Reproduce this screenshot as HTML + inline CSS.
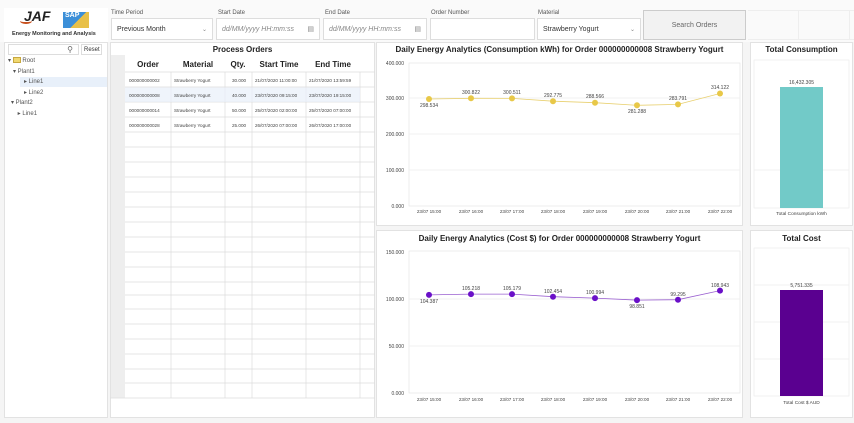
<!DOCTYPE html>
<html><head><meta charset="utf-8"><style>
*{box-sizing:border-box;margin:0;padding:0}
body{width:854px;height:423px;background:#f5f5f5;font-family:"Liberation Sans",sans-serif;position:relative;overflow:hidden;color:#333}
.a{position:absolute}
.lbl{font-size:6px;color:#555}
.box{background:#fff;border:1px solid #ddd;font-size:7px;color:#333;padding:0 5px;display:flex;align-items:center}
.panel{background:#fff;border:1px solid #e2e2e2}
.t{font-size:8px;font-weight:bold;color:#222;text-align:center}
</style></head><body>
<div class="a" style="left:0;top:0;width:854px;height:42px;background:#fafafa"></div>
<!-- logo -->
<div class="a" style="left:4px;top:8px;width:104px;height:34px;background:#fff"></div>
<div class="a" style="left:24px;top:8px;font-size:14px;font-weight:bold;font-style:italic;color:#222">JAF</div>
<div class="a" style="left:20px;top:18px;width:12px;height:6px;border-bottom:2px solid #c8501e;border-radius:50%"></div>
<div class="a" style="left:63px;top:12px;width:26px;height:16px;background:linear-gradient(135deg,#3c8fd8 55%,#e8c048 55%)"></div>
<div class="a" style="left:65px;top:12px;font-size:7px;font-weight:bold;color:#fff">SAP</div>
<div class="a" style="left:12px;top:31px;font-size:5.5px;font-weight:bold;color:#333">Energy Monitoring and Analysis</div>
<!-- filters -->
<div class="a lbl" style="left:111px;top:10px">Time Period</div>
<div class="a box" style="left:111px;top:18px;width:102px;height:22px;justify-content:space-between">Previous Month<span style="font-size:6px;color:#888">⌄</span></div>
<div class="a lbl" style="left:218px;top:10px">Start Date</div>
<div class="a box" style="left:216px;top:18px;width:104px;height:22px;justify-content:space-between;color:#888;font-style:italic">dd/MM/yyyy HH:mm:ss<span style="font-style:normal">▤</span></div>
<div class="a lbl" style="left:325px;top:10px">End Date</div>
<div class="a box" style="left:323px;top:18px;width:104px;height:22px;justify-content:space-between;color:#888;font-style:italic">dd/MM/yyyy HH:mm:ss<span style="font-style:normal">▤</span></div>
<div class="a lbl" style="left:431px;top:10px">Order Number</div>
<div class="a box" style="left:430px;top:18px;width:105px;height:22px"></div>
<div class="a lbl" style="left:538px;top:10px">Material</div>
<div class="a box" style="left:537px;top:18px;width:104px;height:22px;justify-content:space-between">Strawberry Yogurt<span style="font-size:6px;color:#888">⌄</span></div>
<div class="a box" style="left:643px;top:10px;width:103px;height:30px;background:#f2f2f2;border-color:#ccc;justify-content:center;color:#666">Search Orders</div>
<div class="a" style="left:748px;top:10px;width:106px;height:30px;border-top:1px solid #eee;border-bottom:1px solid #eee;background:repeating-linear-gradient(90deg,transparent 0 50px,#eee 50px 51px)"></div>
<!-- tree -->
<div class="a panel" style="left:4px;top:42px;width:104px;height:376px"></div>
<div class="a box" style="left:8px;top:44px;width:71px;height:11px;justify-content:flex-end;font-size:8px;color:#666">⚲</div>
<div class="a box" style="left:81px;top:44px;width:21px;height:11px;font-size:6px;padding:0 2px">Reset</div>
<div class="a" style="left:8px;top:56px;font-size:6px;color:#555;line-height:11px">▾ <span style="display:inline-block;width:8px;height:6px;background:#f0d870;border:1px solid #c8a840;vertical-align:middle"></span> Root<br>&nbsp;&nbsp;&nbsp;▾ Plant1</div>
<div class="a" style="left:20px;top:77px;width:87px;height:10px;background:#e8f0fa"></div>
<div class="a" style="left:24px;top:77px;font-size:6px;color:#555;line-height:10.5px">▸ Line1<br>▸ Line2</div>
<div class="a" style="left:11px;top:98px;font-size:6px;color:#555;line-height:10.5px">▾ Plant2<br>&nbsp;&nbsp;&nbsp;&nbsp;▸ Line1</div>
<!-- table -->
<div class="a panel" style="left:110px;top:42px;width:265px;height:376px"></div>
<div class="a t" style="left:110px;top:45px;width:265px">Process Orders</div>
<div class="a" style="left:111px;top:55px;width:14px;height:343px;background:#eee"></div>
<svg class="a" style="left:0;top:0" width="854" height="423">
<g stroke="#ddd" stroke-width="0.7">
<line x1="125" y1="72" x2="375" y2="72"/>
<line x1="125" y1="87" x2="375" y2="87"/><line x1="125" y1="102" x2="375" y2="102"/><line x1="125" y1="117" x2="375" y2="117"/><line x1="125" y1="132" x2="375" y2="132"/><line x1="125" y1="147" x2="375" y2="147"/><line x1="125" y1="162" x2="375" y2="162"/><line x1="125" y1="177" x2="375" y2="177"/><line x1="125" y1="192" x2="375" y2="192"/><line x1="125" y1="207" x2="375" y2="207"/><line x1="125" y1="222" x2="375" y2="222"/><line x1="125" y1="237" x2="375" y2="237"/><line x1="125" y1="252" x2="375" y2="252"/><line x1="125" y1="267" x2="375" y2="267"/><line x1="125" y1="282" x2="375" y2="282"/><line x1="125" y1="295" x2="375" y2="295"/><line x1="125" y1="309" x2="375" y2="309"/><line x1="125" y1="324" x2="375" y2="324"/><line x1="125" y1="339" x2="375" y2="339"/><line x1="125" y1="354" x2="375" y2="354"/><line x1="125" y1="369" x2="375" y2="369"/><line x1="125" y1="383" x2="375" y2="383"/><line x1="110" y1="398" x2="375" y2="398"/>
<line x1="171" y1="72" x2="171" y2="398"/><line x1="225" y1="72" x2="225" y2="398"/><line x1="252" y1="72" x2="252" y2="398"/><line x1="306" y1="72" x2="306" y2="398"/><line x1="360" y1="72" x2="360" y2="398"/>
</g>
<rect x="125" y="87.5" width="235" height="14.5" fill="#e8f0fa" opacity="0.7"/>
<g font-size="8" font-weight="bold" fill="#222" text-anchor="middle" font-family="Liberation Sans">
<text x="148" y="67">Order</text><text x="198" y="67">Material</text><text x="238" y="67">Qty.</text><text x="279" y="67">Start Time</text><text x="333" y="67">End Time</text></g>
<g font-size="4.6" fill="#444" font-family="Liberation Sans">
<text x="129" y="82">000000000002</text><text x="174" y="82">Strawberry Yogurt</text><text x="232" y="82">30.000</text><text x="255" y="82">21/07/2020 11:00:00</text><text x="309" y="82">21/07/2020 13:59:59</text>
<text x="129" y="97">000000000008</text><text x="174" y="97">Strawberry Yogurt</text><text x="232" y="97">40.000</text><text x="255" y="97">23/07/2020 09:15:00</text><text x="309" y="97">23/07/2020 19:15:00</text>
<text x="129" y="112">000000000014</text><text x="174" y="112">Strawberry Yogurt</text><text x="232" y="112">50.000</text><text x="255" y="112">25/07/2020 02:00:00</text><text x="309" y="112">25/07/2020 07:00:00</text>
<text x="129" y="127">000000000028</text><text x="174" y="127">Strawberry Yogurt</text><text x="232" y="127">25.000</text><text x="255" y="127">26/07/2020 07:00:00</text><text x="309" y="127">26/07/2020 17:00:00</text>
</g>
</svg>
<!-- chart panels -->
<div class="a panel" style="left:376px;top:42px;width:367px;height:184px"></div>
<div class="a panel" style="left:376px;top:230px;width:367px;height:188px"></div>
<div class="a panel" style="left:750px;top:42px;width:103px;height:184px"></div>
<div class="a panel" style="left:750px;top:230px;width:103px;height:188px"></div>
<div class="a t" style="left:376px;top:45px;width:367px">Daily Energy Analytics (Consumption kWh) for Order 000000000008 Strawberry Yogurt</div>
<div class="a t" style="left:376px;top:234px;width:367px">Daily Energy Analytics (Cost $) for Order 000000000008 Strawberry Yogurt</div>
<div class="a t" style="left:750px;top:45px;width:103px">Total Consumption</div>
<div class="a t" style="left:750px;top:234px;width:103px">Total Cost</div>
<svg class="a" style="left:0;top:0" width="854" height="423" font-family="Liberation Sans">
<!-- consumption -->
<rect x="409" y="63" width="331" height="143" fill="none" stroke="#e6e6e6" stroke-width="0.7"/>
<g stroke="#eee" stroke-width="0.7"><line x1="409" y1="98" x2="740" y2="98"/><line x1="409" y1="134" x2="740" y2="134"/><line x1="409" y1="170" x2="740" y2="170"/></g>
<g font-size="5" fill="#444" text-anchor="end"><text x="404" y="65">400.000</text><text x="404" y="100">300.000</text><text x="404" y="136">200.000</text><text x="404" y="172">100.000</text><text x="404" y="208">0.000</text></g>
<g font-size="4.6" fill="#444" text-anchor="middle"><text x="429" y="213">23/07 15:00</text><text x="471" y="213">23/07 16:00</text><text x="512" y="213">23/07 17:00</text><text x="553" y="213">23/07 18:00</text><text x="595" y="213">23/07 19:00</text><text x="637" y="213">23/07 20:00</text><text x="678" y="213">23/07 21:00</text><text x="720" y="213">23/07 22:00</text></g>
<polyline points="429,99 471,98.3 512,98.4 553,101.2 595,102.7 637,105.3 678,104.4 720,93.5" fill="none" stroke="#e8d070" stroke-width="0.8"/>
<g fill="#e8c848"><circle cx="429" cy="99" r="3"/><circle cx="471" cy="98.3" r="3"/><circle cx="512" cy="98.4" r="3"/><circle cx="553" cy="101.2" r="3"/><circle cx="595" cy="102.7" r="3"/><circle cx="637" cy="105.3" r="3"/><circle cx="678" cy="104.4" r="3"/><circle cx="720" cy="93.5" r="3"/></g>
<g font-size="5" fill="#444" text-anchor="middle"><text x="429" y="107">298.534</text><text x="471" y="94">300.822</text><text x="512" y="94">300.511</text><text x="553" y="97">292.775</text><text x="595" y="98">288.566</text><text x="637" y="113">281.288</text><text x="678" y="100">283.791</text><text x="720" y="89">314.122</text></g>
<!-- cost -->
<rect x="409" y="251" width="331" height="142" fill="none" stroke="#e6e6e6" stroke-width="0.7"/>
<g stroke="#eee" stroke-width="0.7"><line x1="409" y1="299" x2="740" y2="299"/><line x1="409" y1="346" x2="740" y2="346"/></g>
<g font-size="5" fill="#444" text-anchor="end"><text x="404" y="254">150.000</text><text x="404" y="301">100.000</text><text x="404" y="348">50.000</text><text x="404" y="395">0.000</text></g>
<g font-size="4.6" fill="#444" text-anchor="middle"><text x="429" y="401">23/07 15:00</text><text x="471" y="401">23/07 16:00</text><text x="512" y="401">23/07 17:00</text><text x="553" y="401">23/07 18:00</text><text x="595" y="401">23/07 19:00</text><text x="637" y="401">23/07 20:00</text><text x="678" y="401">23/07 21:00</text><text x="720" y="401">23/07 22:00</text></g>
<polyline points="429,294.9 471,294.1 512,294.1 553,296.7 595,298.1 637,300.1 678,299.7 720,290.6" fill="none" stroke="#9a60d0" stroke-width="0.8"/>
<g fill="#6a10c8"><circle cx="429" cy="294.9" r="3"/><circle cx="471" cy="294.1" r="3"/><circle cx="512" cy="294.1" r="3"/><circle cx="553" cy="296.7" r="3"/><circle cx="595" cy="298.1" r="3"/><circle cx="637" cy="300.1" r="3"/><circle cx="678" cy="299.7" r="3"/><circle cx="720" cy="290.6" r="3"/></g>
<g font-size="5" fill="#444" text-anchor="middle"><text x="429" y="303">104.387</text><text x="471" y="290">105.218</text><text x="512" y="290">105.179</text><text x="553" y="293">102.454</text><text x="595" y="294">100.994</text><text x="637" y="308">98.851</text><text x="678" y="296">99.295</text><text x="720" y="287">108.943</text></g>
<!-- totals -->
<rect x="754" y="60" width="95" height="148" fill="none" stroke="#ececec" stroke-width="0.7"/>
<line x1="754" y1="170" x2="849" y2="170" stroke="#eee" stroke-width="0.7"/>
<rect x="780" y="87" width="43" height="121" fill="#72cac8"/>
<text x="801.5" y="84" font-size="5" fill="#444" text-anchor="middle">16,432.305</text>
<text x="801.5" y="215" font-size="4.8" fill="#444" text-anchor="middle">Total Consumption kWh</text>
<rect x="754" y="248" width="95" height="148" fill="none" stroke="#ececec" stroke-width="0.7"/>
<g stroke="#eee" stroke-width="0.7"><line x1="754" y1="285" x2="849" y2="285"/><line x1="754" y1="322" x2="849" y2="322"/><line x1="754" y1="359" x2="849" y2="359"/></g>
<rect x="780" y="290" width="43" height="106" fill="#5a0090"/>
<text x="801.5" y="287" font-size="5" fill="#444" text-anchor="middle">5,751.335</text>
<text x="801.5" y="404" font-size="4.8" fill="#444" text-anchor="middle">Total Cost $ AUD</text>
</svg>
</body></html>
